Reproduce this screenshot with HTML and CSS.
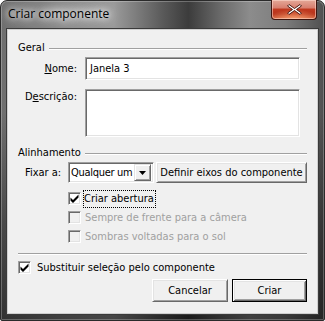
FILE: index.html
```html
<!DOCTYPE html>
<html>
<head>
<meta charset="utf-8">
<link rel="stylesheet" href="styles.css">
</head>
<body>
<div class="window">
  <div class="titlebar">
    <span class="title">Criar componente</span>
    <div class="close">
      <svg width="17" height="13" viewBox="0 0 17 13">
        <path d="M3 1.5 L8.5 5.5 L14 1.5 L15.5 3 L10.5 6.5 L15.5 10 L14 11.5 L8.5 7.5 L3 11.5 L1.5 10 L6.5 6.5 L1.5 3 Z" fill="#fff" stroke="#4a1a12" stroke-width="1" stroke-linejoin="round"/>
      </svg>
    </div>
  </div>
  <div class="client">
    <div class="group-head"><span>Geral</span><i class="rule"></i></div>
    <div class="form-grid">
      <span class="lbl"><u>N</u>ome:</span>
      <div class="input">Janela 3</div>
      <span class="lbl top">D<u>e</u>scrição:</span>
      <div class="input area"></div>
    </div>
    <div class="group-head"><span>Alinhamento</span><i class="rule"></i></div>
    <div class="fix-row">
      <span class="fix-lbl">Fixar a:</span>
      <div class="combo">
        <span class="combo-text">Qualquer um</span>
        <span class="drop"><svg width="7" height="4" viewBox="0 0 7 4"><path d="M0 0 H7 L3.5 4 Z" fill="#000"/></svg></span>
      </div>
      <div class="btn wide">Definir eixos do componente</div>
    </div>
    <div class="checks">
      <div class="chk"><span class="box"><svg width="9" height="9" viewBox="0 0 9 9"><path d="M0.5 3.5 L3 6 L8.5 0.5 V3.5 L3 9 L0.5 6.5 Z" fill="#000"/></svg></span><span class="focus">Criar abertura</span></div>
      <div class="chk off"><span class="box"></span><span class="txt">Sempre de frente para a câmera</span></div>
      <div class="chk off"><span class="box"></span><span class="txt">Sombras voltadas para o sol</span></div>
    </div>
    <div class="sep"></div>
    <div class="chk main"><span class="box"><svg width="9" height="9" viewBox="0 0 9 9"><path d="M0.5 3.5 L3 6 L8.5 0.5 V3.5 L3 9 L0.5 6.5 Z" fill="#000"/></svg></span><span class="txt">Substituir seleção pelo componente</span></div>
    <div class="buttons">
      <div class="btn action">Cancelar</div>
      <div class="btn action default">Criar</div>
    </div>
  </div>
</div>
</body>
</html>
```

FILE: styles.css
```css
* { box-sizing: border-box; }
html, body { margin: 0; padding: 0; background: #fff; }
body { width: 325px; height: 321px; overflow: hidden; }

.window {
  width: 325px;
  height: 321px;
  border: 1px solid #2a2a2a;
  border-radius: 7px 7px 2px 2px;
  background:
    linear-gradient(180deg, rgba(0,0,0,0) 0%, rgba(0,0,0,0) 35%, rgba(0,0,0,0.35) 70%, rgba(0,0,0,0.55) 100%),
    linear-gradient(90deg, #6e6e6e 0%, #8e8e8e 20%, #9a9a9a 35%, #5a5a5a 50%, #3c3c3c 58%, #6a6a6a 68%, #8c8c8c 77%, #7c7c7c 88%, #505050 100%);
  box-shadow: inset 0 0 0 1px rgba(255,255,255,0.25);
  display: flex;
  flex-direction: column;
  padding: 0 6px 6px 6px;
  font-family: "DejaVu Sans Condensed", "DejaVu Sans", sans-serif;
  font-size: 11px;
  color: #000;
}

.titlebar {
  height: 28px;
  flex: none;
  display: flex;
  align-items: flex-start;
  justify-content: space-between;
  position: relative;
}
.title {
  font-family: "Open Sans", "Noto Sans", sans-serif;
  font-size: 12px;
  margin: 4px 0 0 1px;
  color: #000;
  text-shadow: 0 0 6px #fff, 0 0 10px #fff, 0 0 14px rgba(255,255,255,0.9);
}
.close {
  margin-top: -1px;
  margin-right: 1px;
  width: 46px;
  height: 20px;
  border: 1px solid #3e1610;
  border-top: none;
  border-radius: 0 0 4px 4px;
  background:
    radial-gradient(ellipse 60% 50% at 50% 100%, rgba(255,170,120,0.8), rgba(255,170,120,0) 100%),
    linear-gradient(180deg, #e4a898 0%, #d88070 40%, #c0391f 50%, #b8341c 75%, #d0603c 100%);
  box-shadow: inset 0 0 0 1px rgba(255,220,210,0.55);
  display: flex;
  align-items: center;
  justify-content: center;
}

.client {
  flex: 1;
  background: #f0f0f0;
  border: 1px solid #cfcfcf;
  box-shadow: 0 0 0 1px #3a3a3a;
  padding: 11px 10px 0 10px;
  display: flex;
  flex-direction: column;
}

.group-head {
  display: flex;
  align-items: center;
  height: 13px;
  line-height: 13px;
}
.group-head span { margin-right: 4px; }
.rule {
  flex: 1;
  height: 2px;
  border-top: 1px solid #a0a0a0;
  border-bottom: 1px solid #fff;
  margin-top: 2px;
}

.form-grid {
  display: grid;
  grid-template-columns: 59px 215px;
  column-gap: 8px;
  row-gap: 9px;
  margin-top: 3px;
  align-items: center;
}
.lbl { text-align: right; white-space: nowrap; }
.lbl.top { align-self: start; margin-top: 1px; }
.input {
  height: 23px;
  background: #fff;
  border: 1px solid;
  border-color: #a0a0a0 #fff #fff #a0a0a0;
  box-shadow: inset 1px 1px 0 #696969, inset -1px -1px 0 #e3e3e3;
  padding: 4px 4px 0 4px;
  line-height: 13px;
}
.input.area { height: 48px; }

.form-grid + .group-head { margin-top: 9px; }

.fix-row {
  display: flex;
  align-items: center;
  margin-top: 3px;
  height: 21px;
  padding-left: 7px;
}
.fix-lbl { width: 43px; }
.combo {
  width: 86px;
  height: 21px;
  background: #fff;
  border: 1px solid;
  border-color: #a0a0a0 #fff #fff #a0a0a0;
  box-shadow: inset 1px 1px 0 #696969, inset -1px -1px 0 #e3e3e3;
  display: flex;
  align-items: center;
  padding: 2px 2px 2px 2px;
}
.combo-text { flex: 1; white-space: nowrap; overflow: hidden; letter-spacing: -0.3px; }
.drop {
  width: 17px;
  height: 17px;
  flex: none;
  background: #f0f0f0;
  border: 1px solid;
  border-color: #e3e3e3 #696969 #696969 #e3e3e3;
  box-shadow: inset 1px 1px 0 #fff, inset -1px -1px 0 #a0a0a0;
  display: flex;
  align-items: center;
  justify-content: center;
}

.btn {
  background: #f0f0f0;
  border: 1px solid;
  border-color: #fff #696969 #696969 #fff;
  box-shadow: inset 1px 1px 0 #e3e3e3, inset -1px -1px 0 #a0a0a0;
  display: flex;
  align-items: center;
  justify-content: center;
  white-space: nowrap;
}
.btn.wide {
  margin-left: 2px;
  flex: 1;
  height: 21px;
}

.checks {
  margin-top: 6px;
  padding-left: 50px;
  display: flex;
  flex-direction: column;
}
.chk {
  height: 19px;
  display: flex;
  align-items: center;
}
.box {
  width: 13px;
  height: 13px;
  flex: none;
  background: #fff;
  border: 1px solid;
  border-color: #a0a0a0 #fff #fff #a0a0a0;
  box-shadow: inset 1px 1px 0 #696969, inset -1px -1px 0 #e3e3e3;
  display: flex;
  align-items: center;
  justify-content: center;
  margin-right: 4px;
}
.chk.off .box { background: #f0f0f0; }
.chk.off .txt { color: #a0a0a0; }
.focus {
  outline: 1px dotted #000;
  padding: 1px 1px 1px 0;
  margin-left: -1px;
  line-height: 14px;
}

.sep {
  height: 2px;
  border-top: 1px solid #a0a0a0;
  border-bottom: 1px solid #fff;
  margin-top: 7px;
}

.chk.main { margin-top: 3px; }
.chk.main .box { margin-right: 6px; }

.buttons {
  display: flex;
  justify-content: flex-end;
  gap: 4px;
  margin-top: 2px;
}
.btn.action { width: 76px; height: 23px; }
.btn.default {
  width: 75px;
  border-color: #000;
  box-shadow: inset 1px 1px 0 #fff, inset -1px -1px 0 #696969, inset 2px 2px 0 #e3e3e3, inset -2px -2px 0 #a0a0a0;
}
```
